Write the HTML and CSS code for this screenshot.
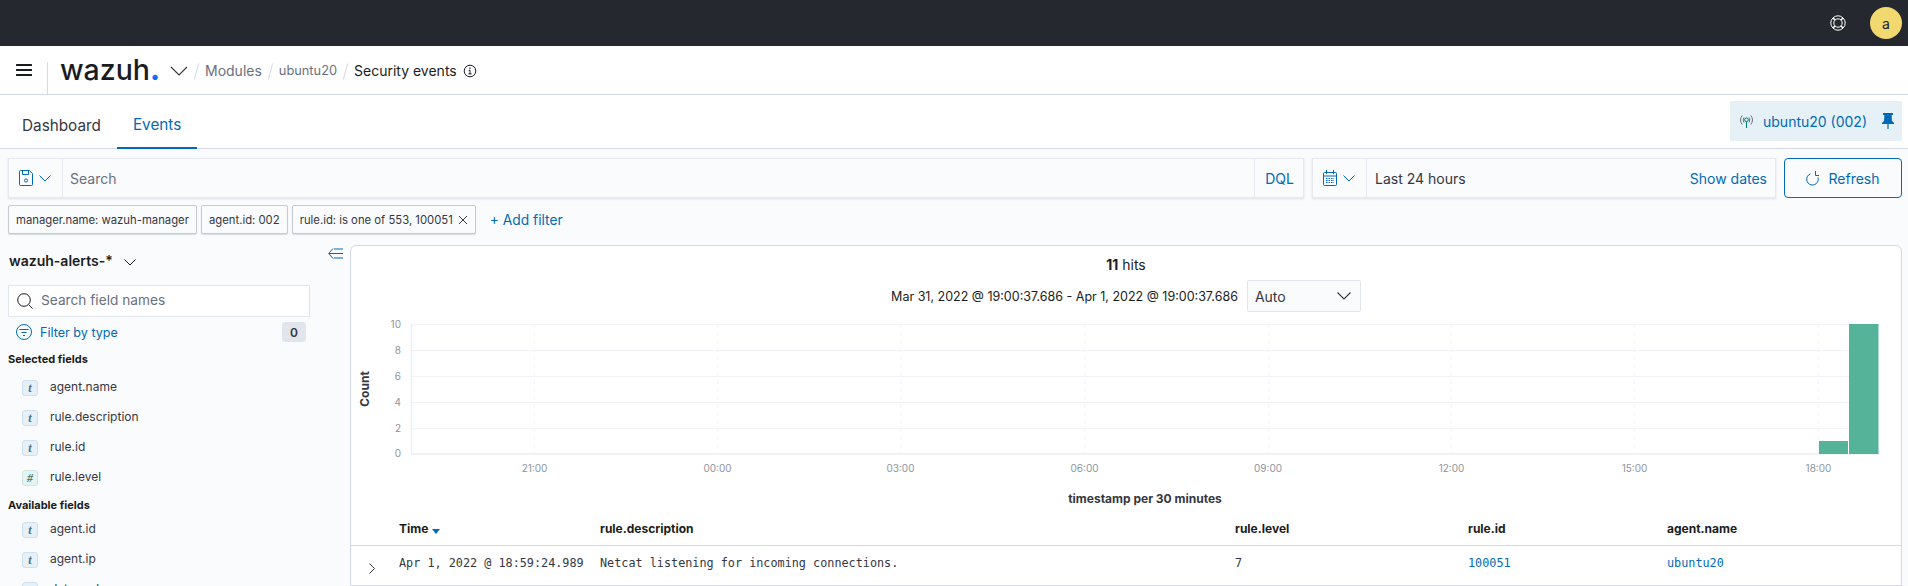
FILE: index.html
```html
<!DOCTYPE html>
<html lang="en">
  <head>
    <meta charset="UTF-8" />
    <title>Security events - wazuh</title>
    <meta name="viewport" content="width=device-width, initial-scale=1.0" />
    <link rel="stylesheet" href="styles.css">
  </head>
  <body>
    <header class="topbar">
      <svg class="help" width="16" height="16" viewBox="0 0 16 16" fill="none" stroke="#fff" stroke-width="1">
        <circle cx="8" cy="8" r="7.2" />
        <circle cx="8" cy="8" r="4.2" />
        <path d="M3 3l2 2M13 3l-2 2M3 13l2-2M13 13l-2-2" stroke-width="1.6" />
      </svg>
      <div class="avatar">a</div>
    </header>

    <nav class="crumbs">
      <svg class="burger" width="16" height="12" viewBox="0 0 16 12" fill="#1a1c21">
        <rect width="16" height="2" rx="0.5" />
        <rect y="5" width="16" height="2" rx="0.5" />
        <rect y="10" width="16" height="2" rx="0.5" />
      </svg>
      <div class="divider"></div>
      <span class="logo">wazuh<span class="logo-dot">.</span></span>
      <svg class="logo-chevron" width="18" height="10" viewBox="0 0 18 10" fill="none" stroke="#343741" stroke-width="1.1">
        <path d="M1 1l8 8 8-8" />
      </svg>
      <span class="slash"></span>
      <span class="crumb">Modules</span>
      <span class="slash"></span>
      <span class="crumb crumb-agent">ubuntu20</span>
      <span class="slash"></span>
      <span class="crumb crumb-current">Security events</span>
      <svg class="info" width="14" height="14" viewBox="0 0 14 14" fill="none" stroke="#1a1c21">
        <circle cx="7" cy="7" r="5.8" />
        <path d="M5.6 6.2H7v3.600M5.300 9.900h3.400" />
        <path d="M7 3.500v1.300" stroke-width="1.300" />
      </svg>
    </nav>

    <div class="tabs">
      <a class="tab">Dashboard</a>
      <a class="tab tab-active">Events</a>
      <div class="agent-pin">
        <svg width="17" height="16" viewBox="0 0 17 16" fill="none" stroke="#69707d">
          <path d="M4.200 2.500a7.500 7.500 0 0 0 0 9M12.800 2.500a7.500 7.500 0 0 1 0 9M6 4.500a4.500 4.500 0 0 0 0 5M11 4.500a4.500 4.500 0 0 1 0 5" />
          <circle cx="8.500" cy="6.800" r="1.800" stroke="#017d73" />
          <path d="M8.500 8.600V15" stroke="#017d73" />
        </svg>
        <span class="agent-name">ubuntu20 (002)</span>
        <svg class="pin" width="12" height="16" viewBox="0 0 12 16" fill="#006bb4">
          <path d="M1 0h10v2H9.600l.4 6 2 2v1H0v-1l2-2 .4-6H1z" />
          <rect x="5.400" y="11" width="1.200" height="5" />
        </svg>
      </div>
    </div>

    <div class="query-row">
      <div class="query-bar">
        <div class="prepend prepend-save">
          <svg width="14" height="16" viewBox="0 0 14 16" fill="none" stroke="#006bb4">
            <path d="M.5 1.500a1 1 0 0 1 1-1h9l3 3v11a1 1 0 0 1-1 1h-11a1 1 0 0 1-1-1z" />
            <path d="M3.500.5v4h6v-4" />
            <circle cx="7" cy="10.500" r="1.600" />
          </svg>
          <svg width="12" height="7" viewBox="0 0 12 7" fill="none" stroke="#006bb4">
            <path d="M.5.5l5.500 5.500 5.500-5.500" />
          </svg>
        </div>
        <span class="query-text">Search</span>
        <span class="dql">DQL</span>
      </div>
      <div class="date-bar">
        <div class="prepend prepend-date">
          <svg width="14" height="16" viewBox="0 0 14 16" fill="none" stroke="#006bb4">
            <rect x=".5" y="2.500" width="13" height="13" rx="1" />
            <path d="M.5 6h13M3.500 0v4M10.500 0v4" />
            <path d="M3 8.500h8M3 10.500h8M3 12.500h8" stroke-dasharray="1.500 1" stroke-width="1.200" />
          </svg>
          <svg width="12" height="7" viewBox="0 0 12 7" fill="none" stroke="#006bb4">
            <path d="M.5.5l5.500 5.500 5.500-5.500" />
          </svg>
        </div>
        <span class="date-text">Last 24 hours</span>
        <span class="show-dates">Show dates</span>
      </div>
      <button class="refresh" type="button">
        <svg width="13" height="15" viewBox="0 0 13 15" fill="none" stroke="#006bb4">
          <path d="M4.500 2.800A5.800 5.800 0 1 0 12 6.500" />
          <path d="M9.500 0v4.500H13" />
        </svg>
        Refresh
      </button>
    </div>

    <div class="filter-row">
      <span class="filter">manager.name: wazuh-manager</span>
      <span class="filter">agent.id: 002</span>
      <span class="filter">rule.id: is one of 553, 100051
        <svg width="10" height="10" viewBox="0 0 10 10" stroke="#343741" fill="none">
          <path d="M1 1l8 8M9 1l-8 8" />
        </svg>
      </span>
      <a class="add-filter">+ Add filter</a>
    </div>

    <main class="discover">
      <aside class="sidebar">
        <div class="index-row">
          <span class="index-name">wazuh-alerts-*</span>
          <svg class="index-chevron" width="12" height="7" viewBox="0 0 12 7" fill="none" stroke="#1a1c21">
            <path d="M.5.5l5.500 5.500 5.500-5.500" />
          </svg>
          <svg class="collapse" width="15" height="11" viewBox="0 0 15 11" fill="none" stroke="#006bb4">
            <path d="M5 .5L.7 5.500 5 10.500M1 5.500h14M6 1h9M6 10h9" />
          </svg>
        </div>
        <div class="field-search">
          <svg width="16" height="16" viewBox="0 0 16 16" fill="none" stroke="#1a1c21">
            <circle cx="7" cy="7" r="6.300" />
            <path d="M11.800 11.800L15.500 15.500" />
          </svg>
          <span class="field-search-label">Search field names</span>
        </div>
        <div class="filter-type">
          <svg width="16" height="16" viewBox="0 0 16 16" fill="none" stroke="#006bb4">
            <circle cx="8" cy="8" r="7.500" />
            <path d="M3.500 5.500h9M5.500 8.500h5M7 11.500h2" />
          </svg>
          <span class="filter-type-label">Filter by type</span>
          <span class="badge">0</span>
        </div>

        <h3 class="field-heading">Selected fields</h3>
        <ul class="fields">
          <li><i class="token">t</i>agent.name</li>
          <li><i class="token">t</i>rule.description</li>
          <li><i class="token">t</i>rule.id</li>
          <li><i class="token token-num">#</i>rule.level</li>
        </ul>
        <h3 class="field-heading heading-available">Available fields</h3>
        <ul class="fields">
          <li><i class="token">t</i>agent.id</li>
          <li><i class="token">t</i>agent.ip</li>
          <li><i class="token">t</i>data.arch</li>
        </ul>
      </aside>

      <section class="panel">
        <div class="hits"><b>11</b> hits</div>
        <div class="range-row">
          <span class="range-text">Mar 31, 2022 @ 19:00:37.686 - Apr 1, 2022 @ 19:00:37.686</span>
          <div class="interval">
            <span>Auto</span>
            <svg width="14" height="8" viewBox="0 0 14 8" fill="none" stroke="#343741" stroke-width="1.100">
              <path d="M.5.5l6.500 6.500 6.500-6.500" />
            </svg>
          </div>
        </div>

        <svg class="chart" width="1550" height="197" viewBox="0 0 1550 197">
          <g stroke="#f3f4f6" stroke-width="1" stroke-dasharray="4 4">
            <path d="M183.500 8v130M366.500 8v130M549.500 8v130M733.500 8v130M917.500 8v130M1100.500 8v130M1283.500 8v130M1467.500 8v130" />
          </g>
          <g stroke="#f1f2f5" stroke-width="1">
            <path d="M60 8.500H1528M60 34.500H1528M60 60.500H1528M60 86.500H1528M60 112.500H1528" />
          </g>
          <path d="M60.500 8V138H1528" fill="none" stroke="#eceef2" stroke-width="1.500" />
          <rect x="1468" y="125" width="29" height="13" fill="#54b399" />
          <rect x="1498" y="8" width="29.500" height="130" fill="#54b399" />
          <g class="tick" text-anchor="end">
            <text x="50" y="12">10</text>
            <text x="50" y="38">8</text>
            <text x="50" y="64">6</text>
            <text x="50" y="90">4</text>
            <text x="50" y="116">2</text>
            <text x="50" y="141">0</text>
          </g>
          <g class="tick" text-anchor="middle">
            <text x="183.500" y="156">21:00</text>
            <text x="366.500" y="156">00:00</text>
            <text x="549.500" y="156">03:00</text>
            <text x="733.500" y="156">06:00</text>
            <text x="917" y="156">09:00</text>
            <text x="1100.500" y="156">12:00</text>
            <text x="1283.500" y="156">15:00</text>
            <text x="1467.500" y="156">18:00</text>
          </g>
          <text class="axis-title" transform="translate(17.500 73) rotate(-90)" text-anchor="middle">Count</text>
          <text class="axis-title" x="794" y="187" text-anchor="middle">timestamp per 30 minutes</text>
        </svg>

        <table class="docs">
          <colgroup>
            <col class="col-toggle" />
            <col class="col-time" />
            <col class="col-desc" />
            <col class="col-level" />
            <col class="col-id" />
            <col />
          </colgroup>
          <thead>
            <tr>
              <th></th>
              <th>Time <span class="sort"></span></th>
              <th>rule.description</th>
              <th>rule.level</th>
              <th>rule.id</th>
              <th>agent.name</th>
            </tr>
          </thead>
          <tbody>
            <tr>
              <td class="toggle">
                <svg width="6" height="11" viewBox="0 0 6 11" fill="none" stroke="#343741">
                  <path d="M.5.5l5 5-5 5" />
                </svg>
              </td>
              <td>Apr 1, 2022 @ 18:59:24.989</td>
              <td>Netcat listening for incoming connections.</td>
              <td>7</td>
              <td><a class="cell-link">100051</a></td>
              <td><a class="cell-link">ubuntu20</a></td>
            </tr>
          </tbody>
        </table>
      </section>
    </main>
  </body>
</html>
```

FILE: styles.css
```css
* {
  box-sizing: border-box;
}

html,
body {
  height: 586px;
  margin: 0;
  overflow: hidden;
}

body {
  font-family: Inter, "Noto Sans", sans-serif;
  font-size: 14px;
  color: #343741;
  background: #fafbfd;
}

svg {
  display: block;
  flex: none;
}

/* top dark bar */
.topbar {
  height: 46px;
  background: #25282f;
  display: flex;
  align-items: center;
  justify-content: flex-end;
  padding-right: 6px;
}

.help {
  margin-right: 24px;
}

.avatar {
  width: 32px;
  height: 32px;
  border-radius: 50%;
  background: #f1d86f;
  color: #1a1c21;
  font-size: 14px;
  display: flex;
  align-items: center;
  justify-content: center;
}

/* breadcrumbs */
.crumbs {
  height: 49px;
  background: #fff;
  border-bottom: 1px solid #d3dae6;
  display: flex;
  align-items: center;
  padding-left: 16px;
}

.burger {
  margin-top: 0;
}

.divider {
  width: 1px;
  height: 32px;
  background: #d3dae6;
  margin: 16px 12px 0 15px;
}

.logo {
  font-size: 28.5px;
  font-weight: 500;
  color: #1a1c21;
  line-height: 30px;
  width: 110px;
  margin-top: 0;
}

.logo-dot {
  color: #0d6efd;
  font-weight: 800;
}

.logo-chevron {
  margin: 1px 0 0 0;
}

.slash {
  width: 1px;
  height: 17px;
  background: #d3dae6;
  transform: rotate(15deg);
  margin: 2px 8px 0;
}

.crumb {
  color: #69707d;
  margin-top: 1px;
}

.crumb-agent {
  font-size: 12.8px;
}

.crumb-current {
  color: #1a1c21;
}

.info {
  margin: 2px 0 0 6px;
}

/* tabs */
.tabs {
  height: 54px;
  background: #fff;
  border-bottom: 1px solid #d3dae6;
  display: flex;
  align-items: stretch;
}

.tab {
  font-size: 15.3px;
  padding: 6px 16px 0;
  margin-left: 6px;
  display: flex;
  align-items: center;
  height: 54px;
}

.tab + .tab {
  margin-left: 0;
}

.tab-active {
  color: #006bb4;
  border-bottom: 2px solid #006bb4;
}

.agent-pin {
  width: 172px;
  height: 40px;
  margin: 6px 6px 0 auto;
  background: #e6f0f7;
  display: flex;
  align-items: center;
  padding-left: 8px;
}

.agent-name {
  color: #006bb4;
  margin-left: 8px;
}

.pin {
  margin-left: 15px;
}

/* query bar */
.query-row {
  display: flex;
  gap: 8px;
  padding: 9px 6px 0 8px;
}

.query-bar,
.date-bar {
  height: 40px;
  display: flex;
  align-items: center;
  border: 1px solid #e6e9ef;
  box-shadow: 0 1px 2px rgba(152, 162, 179, 0.3);
  background: #fafbfd;
}

.query-bar {
  flex: 1;
}

.date-bar {
  width: 464px;
}

.prepend {
  height: 38px;
  display: flex;
  align-items: center;
  gap: 6px;
  border-right: 1px solid #e6e9ef;
}

.prepend-save {
  width: 54px;
  padding-left: 10px;
}

.prepend-date {
  width: 54px;
  padding-left: 10px;
}

.query-text {
  flex: 1;
  padding-left: 7px;
  color: #69707d;
}

.dql {
  height: 38px;
  display: flex;
  align-items: center;
  padding: 0 9px 0 10px;
  color: #006bb4;
  border-left: 1px solid #e6e9ef;
}

.date-text {
  flex: 1;
  padding-left: 8px;
}

.show-dates {
  color: #006bb4;
  padding-right: 8px;
}

.refresh {
  width: 118px;
  height: 40px;
  border: 1px solid #006bb4;
  border-radius: 4px;
  background: #fafbfd;
  color: #006bb4;
  font-family: inherit;
  font-size: 14px;
  display: flex;
  align-items: center;
  justify-content: center;
  gap: 9px;
  padding: 0;
}

/* filters */
.filter-row {
  display: flex;
  align-items: center;
  gap: 4px;
  padding: 7px 0 0 8px;
}

.filter {
  height: 29px;
  display: flex;
  align-items: center;
  gap: 5px;
  padding: 0 7px;
  font-size: 11.3px;
  border: 1px solid #c4c9d2;
  border-radius: 2px;
  box-shadow: 0 1px 1px rgba(152, 162, 179, 0.35);
  background: #fafbfd;
}

.add-filter {
  color: #006bb4;
  margin-left: 10px;
  font-size: 13.8px;
}

/* main area */
.discover {
  display: flex;
  gap: 7px;
  padding: 11px 6px 0 8px;
}

.sidebar {
  width: 335px;
  flex: none;
}

.index-row {
  height: 32px;
  display: flex;
  align-items: flex-start;
}

.index-name {
  font-size: 14px;
  font-weight: 600;
  color: #1a1c21;
  margin: 7px 0 0 1px;
  line-height: 18px;
}

.index-chevron {
  margin: 14px 0 0 11px;
}

.collapse {
  margin: 3px 0 0 auto;
}

.field-search {
  width: 302px;
  height: 32px;
  margin-top: 8px;
  border: 1px solid #e1e5ec;
  background: #fff;
  display: flex;
  align-items: center;
  gap: 8px;
  padding-left: 8px;
  color: #69707d;
}

.field-search-label {
  font-size: 13.7px;
  padding-bottom: 2px;
}

.filter-type {
  width: 298px;
  height: 20px;
  margin-top: 5px;
  display: flex;
  align-items: center;
  gap: 8px;
  padding-left: 8px;
}

.filter-type-label {
  flex: 1;
  color: #006bb4;
  font-size: 12.6px;
}

.badge {
  width: 24px;
  height: 20px;
  border-radius: 3px;
  background: #e0e5ee;
  font-size: 12px;
  font-weight: 600;
  display: flex;
  align-items: center;
  justify-content: center;
}

.field-heading {
  margin: 9px 0 0;
  font-size: 11px;
  line-height: 16px;
  font-weight: 700;
  color: #1a1c21;
}

.heading-available {
  margin-top: 5px;
}

.fields {
  list-style: none;
  margin: 5px 0 0;
  padding: 0;
}

.heading-available + .fields {
  margin-top: 1px;
}

.fields li {
  height: 30px;
  display: flex;
  align-items: center;
  gap: 12px;
  padding: 0 0 2px 14px;
  font-size: 12px;
}

.token {
  width: 16px;
  height: 16px;
  border: 1px solid #cfe0ee;
  border-radius: 3px;
  background: #e6f0f8;
  color: #4a7194;
  font-family: "Liberation Serif", serif;
  font-weight: 700;
  font-size: 12px;
  display: flex;
  align-items: center;
  justify-content: center;
  margin-top: 4px;
}

.token-num {
  background: #e6f5f1;
  border-color: #cbe8df;
  color: #3f7f6b;
}

/* results panel */
.panel {
  flex: 1;
  height: 400px;
  background: #fff;
  border: 1px solid #d3dae6;
  border-radius: 6px;
}

.hits {
  text-align: center;
  margin-top: 9px;
  line-height: 20px;
  color: #1a1c21;
}

.hits b {
  font-weight: 700;
}

.range-row {
  display: flex;
  align-items: center;
  justify-content: center;
  gap: 9px;
  margin-top: 5px;
}

.range-text {
  font-size: 12.5px;
  color: #1a1c21;
}

.interval {
  width: 114px;
  height: 32px;
  border: 1px solid #e1e5ec;
  border-radius: 2px;
  background: #fafbfd;
  display: flex;
  align-items: center;
  justify-content: space-between;
  padding: 0 9px 0 7px;
}

.chart {
  margin-top: 4px;
}

.tick {
  font-family: Inter, sans-serif;
  font-size: 10px;
  fill: #8e949e;
}

.axis-title {
  font-family: Inter, sans-serif;
  font-size: 12px;
  font-weight: 700;
  fill: #343741;
}

.docs {
  width: 100%;
  table-layout: fixed;
  border-collapse: collapse;
  margin-top: -1px;
  font-size: 12px;
}

.col-toggle {
  width: 48px;
}

.col-time {
  width: 201px;
}

.col-desc {
  width: 635px;
}

.col-level {
  width: 233px;
}

.col-id {
  width: 199px;
}

.docs th {
  height: 33px;
  padding: 0;
  text-align: left;
  font-weight: 700;
  color: #1a1c21;
  border-bottom: 1px solid #d3dae6;
}

.sort {
  display: inline-block;
  border: 4px solid transparent;
  border-top: 5px solid #006bb4;
  border-bottom: 0;
  margin-left: 1px;
  vertical-align: -1px;
}

.docs td {
  height: 40px;
  padding: 0 0 4px;
  font-family: "DejaVu Sans Mono", "Liberation Mono", monospace;
  font-size: 11.8px;
  color: #343741;
  border-bottom: 1px solid #d3dae6;
}

.docs .toggle {
  padding: 6px 0 0 18px;
}

.cell-link {
  color: #006bb4;
}
```
